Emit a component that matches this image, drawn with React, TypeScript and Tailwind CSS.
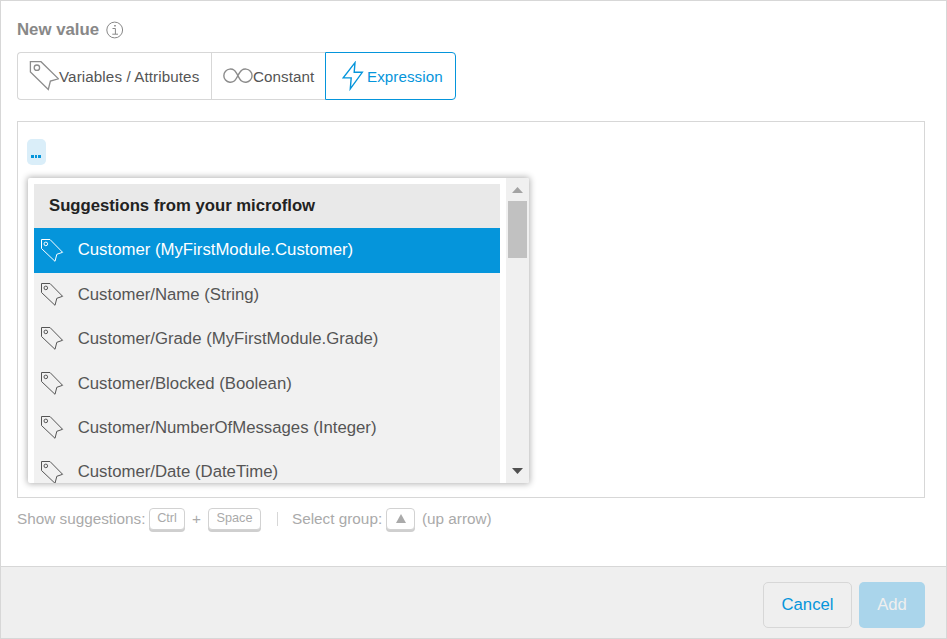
import type { ReactNode } from "react";

const suggestions = [
  "Customer (MyFirstModule.Customer)",
  "Customer/Name (String)",
  "Customer/Grade (MyFirstModule.Grade)",
  "Customer/Blocked (Boolean)",
  "Customer/NumberOfMessages (Integer)",
  "Customer/Date (DateTime)",
];

function LargeTag() {
  return (
    <svg className="h-[30px] w-[30px] shrink-0" viewBox="0 0 30 30" fill="none" stroke="#8c8c8c" strokeWidth="1.3">
      <path d="M1.4.7H12L29.5 17.8L21.4 20.1L19.3 28.5L1.4 11Z" />
      <circle cx="7.9" cy="6.7" r="2.7" />
    </svg>
  );
}

function SmallTag() {
  return (
    <svg className="h-6 w-6 shrink-0" viewBox="0 0 24 24" fill="none" stroke="currentColor" strokeWidth="1">
      <path d="M.5.5H9L21.6 13.3L15.8 15.3L14 22.3L.5 9.5Z" />
      <circle cx="4.8" cy="4.9" r="1.8" />
    </svg>
  );
}

function Key({ className, children }: { className: string; children: ReactNode }) {
  return (
    <kbd
      className={`flex h-[22px] shrink-0 items-center justify-center rounded-[4px] border border-[#d2d2d2] bg-white pb-px font-[inherit] text-[12.7px] leading-none shadow-[0_2px_0_#cfcfcf] ${className}`}
    >
      {children}
    </kbd>
  );
}

export default function App() {
  return (
    <div className="flex h-[639px] w-[947px] flex-col overflow-hidden border border-[#d7d7d7] bg-white font-['Liberation_Sans',Arial,sans-serif]">
      <main className="flex h-[565px] flex-col pl-4 pr-[21px] pt-[19px]">
        <div className="flex h-5 items-center gap-[7px]">
          <h1 className="w-[82px] whitespace-nowrap text-[16.8px] font-bold leading-5 text-[#888]">New value</h1>
          <svg className="h-[18px] w-[18px]" viewBox="0 0 18 18" fill="none" stroke="#888">
            <circle cx="8.7" cy="9" r="7.9" />
            <path d="M6.5 7.5H9.4V13M6.3 13.2H12" />
            <path d="M8.2 4.7H9.8" strokeWidth="1.5" />
          </svg>
        </div>

        <div className="mt-3 flex h-12 w-[439px] shrink-0 text-[15.2px] text-[#555]">
          <div className="flex w-[194px] items-center whitespace-nowrap rounded-l-[4px] border border-r-0 border-[#d7d7d7] pl-[11px]">
            <LargeTag />
            <span className="pt-[3px] tracking-[0.1px]">Variables / Attributes</span>
          </div>
          <div className="flex w-[114px] items-center border border-r-0 border-[#d7d7d7] pl-[11px]">
            <svg className="h-[18px] w-[30px]" viewBox="0 0 30 18" fill="none" stroke="#8c8c8c" strokeWidth="1.4">
              <path d="M11.3 3.3C14 5.1 15.8 12.1 18.6 14A6.6 6.6 0 1 0 18.6 3.3C15.8 5.1 14 12.1 11.3 14A6.6 6.6 0 1 1 11.3 3.3Z" />
            </svg>
            <span className="pt-[3px] tracking-[0.05px]">Constant</span>
          </div>
          <div className="flex w-[131px] items-center rounded-r-[4px] border border-[#0595db] pl-4 text-[#0595db]">
            <svg className="h-[30px] w-[22px]" viewBox="0 0 22 30" fill="none" stroke="currentColor" strokeWidth="1.4">
              <path d="M13 1.6L1.2 16.9H9.2L8.3 27.8L20.3 11.3H12.2Z" />
            </svg>
            <span className="pl-[3px] pt-[3px] tracking-[0.05px]">Expression</span>
          </div>
        </div>

        <section className="mt-[21px] flex h-[377px] w-[908px] shrink-0 flex-col items-start border border-[#d7d7d7] pl-[9px] pt-[17px]">
          <div className="flex h-[26px] w-[19px] items-end gap-px rounded-[5px] bg-[#daeef9] pb-[7px] pl-1">
            <i className="h-[3px] w-[3px] bg-[#0595db]" />
            <i className="h-[3px] w-[2px] bg-[#0595db]" />
            <i className="h-[3px] w-[3px] bg-[#0595db]" />
          </div>

          <div className="ml-px mt-[13px] flex h-[305px] w-[501px] overflow-hidden rounded-[2px] bg-white pl-[6px] shadow-[0_0_6px_1px_rgba(0,0,0,0.3)]">
            <div className="mt-[6px] h-[299px] w-[466px] overflow-hidden bg-[#f1f1f1] text-[16.75px]">
              <div className="flex h-[44.4px] items-center bg-[#e9e9e9] pb-[2px] pl-[15px] text-[16.7px] font-bold text-[#222]">
                Suggestions from your microflow
              </div>
              {suggestions.map((label, index) => (
                <div
                  key={label}
                  className={`flex h-[44.4px] items-center whitespace-nowrap pl-[7px] ${
                    index === 0 ? "bg-[#0595db] text-white" : "text-[#555]"
                  }`}
                >
                  <SmallTag />
                  <span className="pb-[1.4px] pl-[12.7px]">{label}</span>
                </div>
              ))}
            </div>
            <div className="ml-[6px] flex w-[23px] flex-col items-center bg-[#f0f0f0]">
              <svg className="mt-[9px] h-[6px] w-[11px] shrink-0" viewBox="0 0 11 6" fill="#a3a3a3">
                <path d="M0 6L5.5 0L11 6Z" />
              </svg>
              <div className="mt-2 h-[57px] w-[19px] shrink-0 bg-[#c1c1c1]" />
              <svg className="mb-[9px] mt-auto h-[6px] w-[11px] shrink-0" viewBox="0 0 11 6" fill="#505050">
                <path d="M0 0L5.5 6L11 0Z" />
              </svg>
            </div>
          </div>
        </section>

        <div className="mt-[10px] flex h-[22px] items-center whitespace-nowrap text-[15.3px] text-[#aaa]">
          <span className="w-[132px]">Show suggestions:</span>
          <Key className="w-9">Ctrl</Key>
          <span className="w-[23px] text-center">+</span>
          <Key className="w-[53px]">Space</Key>
          <span className="ml-4 h-[14px] w-px bg-[#d7d7d7]" />
          <span className="ml-[14px] w-[94px]">Select group:</span>
          <Key className="w-[29px]">
            <svg className="h-[9px] w-[10px]" viewBox="0 0 10 9" fill="#aaa">
              <path d="M0 9L5 0L10 9Z" />
            </svg>
          </Key>
          <span className="ml-[7px]">(up arrow)</span>
        </div>
      </main>

      <footer className="flex flex-1 items-start justify-end gap-[7px] border-t border-[#d7d7d7] bg-[#efefef] pr-[21px] pt-[15px] text-[16.7px]">
        <button className="h-[46px] w-[89px] rounded-[5px] border border-[#d7d7d7] pb-px text-[#0595db]">Cancel</button>
        <button className="h-[46px] w-[66px] rounded-[5px] bg-[#aad5eb] pb-px text-[#efefef]">Add</button>
      </footer>
    </div>
  );
}
